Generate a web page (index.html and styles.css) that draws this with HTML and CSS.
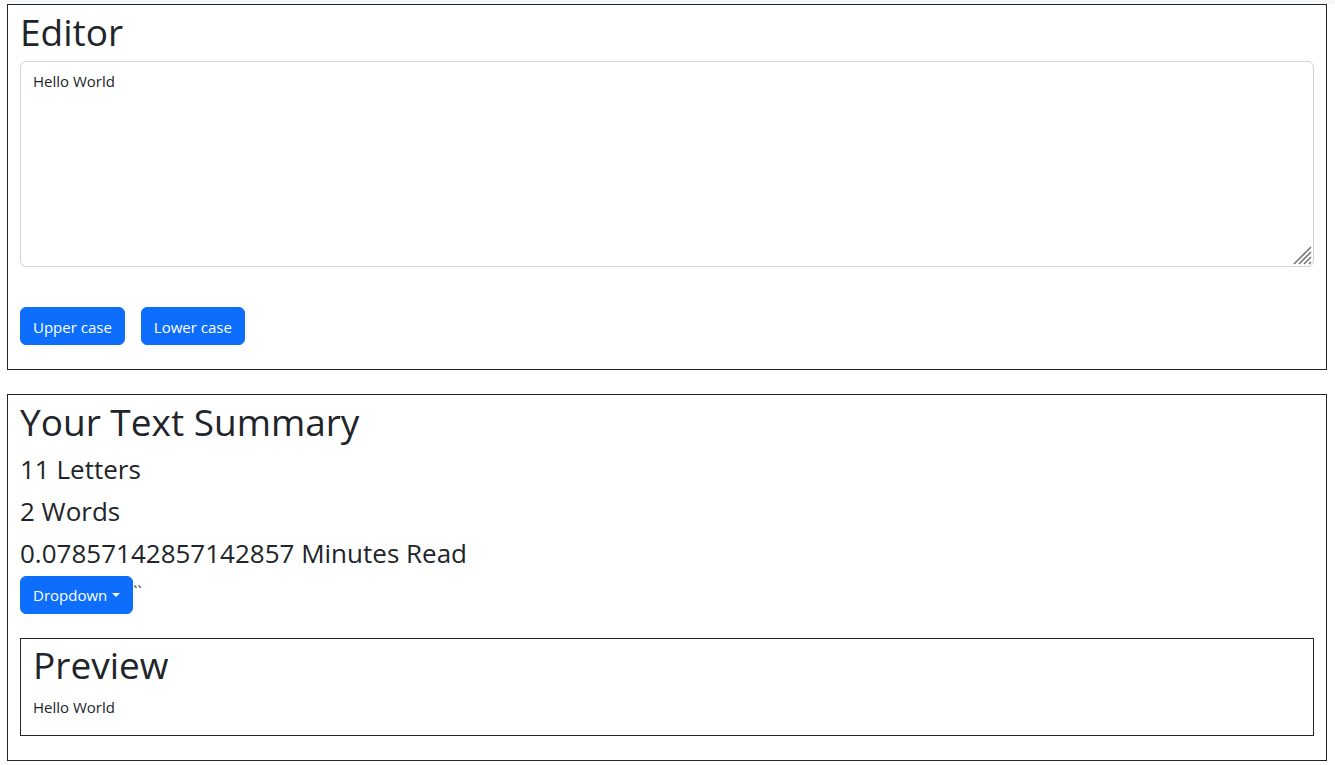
FILE: index.html
```
<!DOCTYPE html>
<html lang="en">
<head>
<meta charset="utf-8">
<title>Text Editor</title>
<link rel="stylesheet" href="styles.css">
</head>
<body>
<main class="page">
  <section class="panel editor">
    <h1 class="title"><label for="text">Editor</label></h1>
    <div class="field">
      <textarea class="input" id="text">Hello World</textarea>
      <svg class="grip" width="20" height="20" viewBox="0 0 20 20" aria-hidden="true"><path d="M1 18 18 1M6 18 18 6M11 18 18 11M16 18 18 16" stroke="#777" stroke-width="1.600" fill="none"/></svg>
    </div>
    <div class="actions">
      <button class="btn" type="button">Upper case</button>
      <button class="btn" type="button">Lower case</button>
    </div>
  </section>
  <section class="panel summary">
    <h1 class="title">Your Text Summary</h1>
    <div class="stats">
      <h3 class="stat">11 Letters</h3>
      <h3 class="stat">2 Words</h3>
      <h3 class="stat">0.07857142857142857 Minutes Read</h3>
    </div>
    <div class="menu"><button class="btn toggle" type="button" aria-haspopup="true">Dropdown</button><span class="ticks">``</span></div>
    <section class="panel preview">
      <h1 class="title">Preview</h1>
      <p class="text">Hello World</p>
    </section>
  </section>
</main>
</body>
</html>
```
FILE: styles.css
```
* { box-sizing: border-box; }
body {
  margin: 0;
  background: #fff;
  color: #212529;
  font: 15px/24px "Segoe UI", "Open Sans", "Noto Sans", sans-serif;
}
.page {
  display: flex;
  flex-direction: column;
  gap: 24px;
  padding: 0 8px 4px 7px;
  border-top: 4px solid #f5f7f8;
}
.panel {
  border: 1px solid #212529;
  padding: 3px 12px 24px;
}
.title, .stat, .text { margin: 0; font-weight: 400; }
.title { font-size: 37px; line-height: 48px; }
.field { position: relative; margin-top: 5px; }
.input {
  display: block;
  width: 100%;
  height: 206px;
  padding: 7px 12px;
  border: 1px solid #ced4da;
  border-radius: 6px;
  background: #fff;
  color: inherit;
  font: inherit;
  resize: none;
  outline: 0;
}
.grip { position: absolute; right: 1px; bottom: 1px; }
.actions { display: flex; gap: 16px; margin-top: 40px; }
.btn {
  padding: 7px 12px 5px;
  border: 1px solid #0d6efd;
  border-radius: 6px;
  background: #0d6efd;
  color: #fff;
  font: inherit;
}
.stats {
  display: flex;
  flex-direction: column;
  gap: 8px;
  padding: 6px 0;
}
.stat { font-size: 26px; line-height: 34px; }
.menu { display: flex; }
.toggle { padding: 6px 12px; }
.toggle::after {
  content: "";
  display: inline-block;
  margin-left: 5px;
  vertical-align: 4px;
  border: 4px solid transparent;
  border-top-color: #fff;
  border-bottom: 0;
}
.ticks { padding-top: 3px; }
.preview { margin-top: 24px; padding: 2px 12px 16px; }
.preview .text { margin-top: 6px; }
```
